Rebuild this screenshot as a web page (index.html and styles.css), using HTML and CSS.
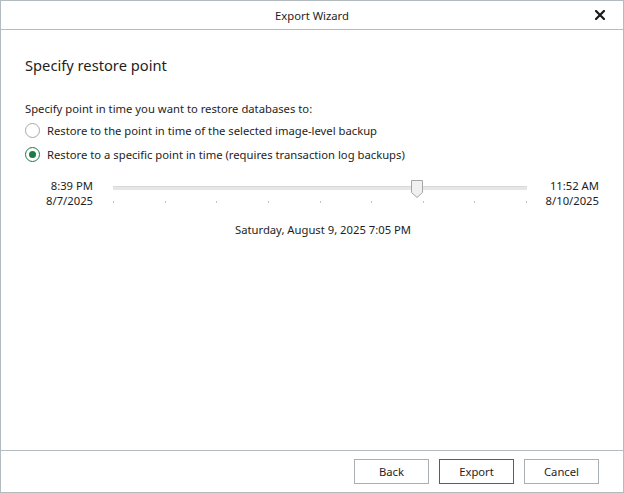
FILE: index.html
```html
<!DOCTYPE html>
<html>
<head>
<meta charset="utf-8">
<link rel="stylesheet" href="styles.css">
</head>
<body>
<div class="window">
  <header class="titlebar">
    <span class="title">Export Wizard</span>
    <span class="close">
      <svg width="10" height="10" viewBox="0 0 10 10"><path d="M1 1L9 9M9 1L1 9" stroke="#1a1a1a" stroke-width="2.2" stroke-linecap="square"/></svg>
    </span>
  </header>
  <main class="content">
    <h1 class="heading">Specify restore point</h1>
    <p class="prompt">Specify point in time you want to restore databases to:</p>
    <div class="radio">
      <span class="radio-mark"></span>
      <span class="radio-label">Restore to the point in time of the selected image-level backup</span>
    </div>
    <div class="radio checked">
      <span class="radio-mark"></span>
      <span class="radio-label">Restore to a specific point in time (requires transaction log backups)</span>
    </div>
    <div class="slider-row">
      <div class="edge edge-left"><div>8:39 PM</div><div>8/7/2025</div></div>
      <div class="slider">
        <div class="track"></div>
        <div class="thumb">
          <svg width="12" height="18" viewBox="0 0 12 18"><path d="M0.5 0.5H11.5V12.5L6 17.5L0.5 12.5Z" fill="#f0f0f0" stroke="#a6a6a6"/></svg>
        </div>
        <div class="ticks">
          <span class="tick"></span><span class="tick"></span><span class="tick"></span>
          <span class="tick"></span><span class="tick"></span><span class="tick"></span>
          <span class="tick"></span><span class="tick"></span><span class="tick"></span>
        </div>
      </div>
      <div class="edge edge-right"><div>11:52 AM</div><div>8/10/2025</div></div>
    </div>
    <div class="selected">Saturday, August 9, 2025 7:05 PM</div>
  </main>
  <footer class="footer">
    <button class="btn">Back</button>
    <button class="btn primary">Export</button>
    <button class="btn">Cancel</button>
  </footer>
</div>
</body>
</html>
```
FILE: styles.css
```css
* { box-sizing: border-box; }
html, body { margin: 0; padding: 0; background: #ffffff; }
body {
  font-family: "Noto Sans", "Open Sans", sans-serif;
  font-size: 11.25px;
  color: #1e1e1e;
}
.window {
  width: 624px;
  height: 493px;
  border: 1px solid #b3bbbf;
  display: flex;
  flex-direction: column;
}
.titlebar {
  height: 29px;
  border-bottom: 1px solid #b3bbbf;
  display: flex;
  align-items: center;
  justify-content: center;
  position: relative;
}
.title { font-size: 11.25px; color: #1e1e1e; }
.close {
  position: absolute;
  right: 18px;
  top: 9px;
  width: 10px;
  height: 10px;
  display: flex;
}
.content {
  flex: 1;
  padding: 25px 24px 0 24px;
  display: flex;
  flex-direction: column;
}
.heading {
  margin: 0;
  font-size: 14.7px;
  font-weight: normal;
  line-height: 20px;
}
.prompt {
  margin: 24px 0 0 0;
  line-height: 19px;
}
.radio {
  display: flex;
  align-items: center;
  height: 24px;
  gap: 7px;
}
.radio-mark {
  width: 15px;
  height: 15px;
  border-radius: 50%;
  border: 1px solid #a8a8a8;
  display: flex;
  align-items: center;
  justify-content: center;
}
.radio.checked .radio-mark { border-color: #1c7a44; }
.radio.checked .radio-mark::after {
  content: "";
  width: 7px;
  height: 7px;
  border-radius: 50%;
  background: #1c7a44;
}
.slider-row {
  display: flex;
  margin-top: 12px;
  align-items: flex-start;
}
.edge { line-height: 15px; }
.edge-left { width: 68px; text-align: right; }
.edge-right { width: 72px; text-align: right; }
.slider {
  width: 414px;
  margin-left: 20px;
  position: relative;
  height: 30px;
}
.track {
  margin-top: 8px;
  height: 4px;
  background: #e6e6e6;
  border-top: 1px solid #d8d8d8;
}
.thumb {
  position: absolute;
  left: 298px;
  top: 2px;
  display: flex;
}
.ticks {
  margin-top: 11px;
  display: flex;
  justify-content: space-between;
}
.tick {
  width: 1px;
  height: 2px;
  background: #c4c4c4;
}
.selected {
  margin-top: 13px;
  text-align: center;
  padding-left: 22px;
  line-height: 17px;
}
.footer {
  height: 42px;
  border-top: 1px solid #b3bbbf;
  display: flex;
  justify-content: flex-end;
  gap: 10px;
  padding: 8px 24px 0 0;
}
.btn {
  width: 75px;
  height: 25px;
  background: #ffffff;
  border: 1px solid #a9afb3;
  font-family: inherit;
  font-size: 11.25px;
  color: #1e1e1e;
  padding: 0;
}
.btn.primary { border-color: #1f7f47; }
```
